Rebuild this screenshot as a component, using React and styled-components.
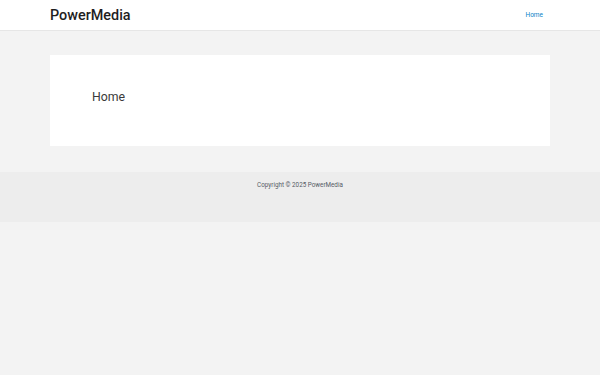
import React from "react";
import styled, { createGlobalStyle } from "styled-components";

const Global = createGlobalStyle`
  html, body { margin: 0; padding: 0; background: #f3f3f3; }
  body { font-family: Roboto, "Liberation Sans", sans-serif; }
`;

const Page = styled.div`
  min-height: 375px;
  background: #f3f3f3;
  display: flex;
  flex-direction: column;
`;

const Header = styled.header`
  height: 31px;
  background: #ffffff;
  border-bottom: 1px solid #e6e6e6;
  box-sizing: border-box;
  padding: 0 50px;
  display: flex;
  align-items: center;
  justify-content: space-between;
`;

const Logo = styled.a`
  font-size: 14.4px;
  font-weight: 500;
  color: #1e1e1e;
  text-decoration: none;
`;

const Nav = styled.nav`
  display: flex;
  gap: 10px;
  padding-right: 7px;
`;

const NavLink = styled.a`
  font-size: 6.5px;
  color: #0a84c8;
  text-decoration: none;
`;

const Main = styled.main`
  padding: 24px 50px 26px;
`;

const Card = styled.article`
  background: #ffffff;
  height: 91px;
  box-sizing: border-box;
  padding: 35px 42px 0;
`;

const Title = styled.h1`
  margin: 0;
  font-size: 12.3px;
  font-weight: 400;
  color: #3a3a3a;
`;

const Footer = styled.footer`
  background: #ededed;
  height: 50px;
  box-sizing: border-box;
  padding-top: 9px;
  text-align: center;
`;

const Copy = styled.p`
  margin: 0;
  font-size: 6.3px;
  color: #555b66;
`;

export default function App() {
  return (
    <>
      <Global />
      <Page>
        <Header>
          <Logo href="#">PowerMedia</Logo>
          <Nav>
            <NavLink href="#">Home</NavLink>
          </Nav>
        </Header>
        <Main>
          <Card>
            <Title>Home</Title>
          </Card>
        </Main>
        <Footer>
          <Copy>Copyright © 2025 PowerMedia</Copy>
        </Footer>
      </Page>
    </>
  );
}
